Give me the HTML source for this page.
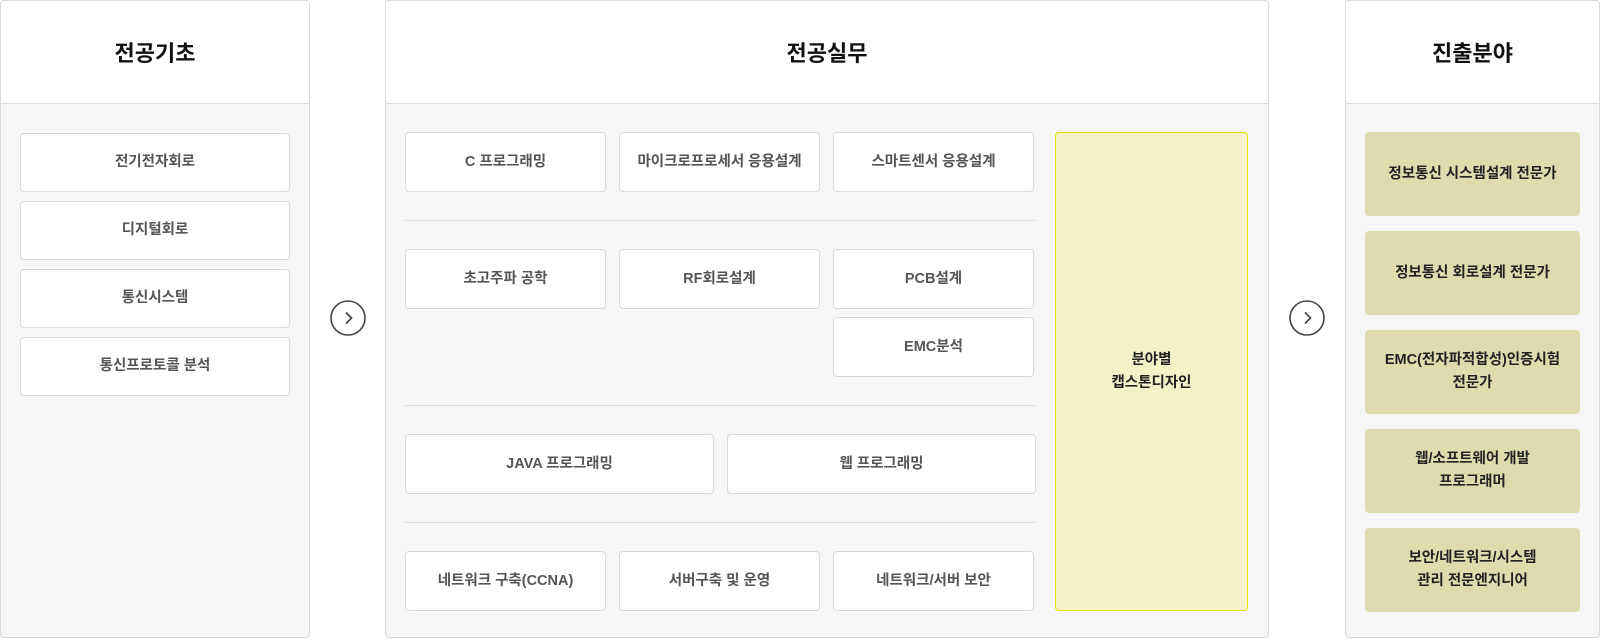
<!DOCTYPE html>
<html><head><meta charset="utf-8"><style>
*{box-sizing:border-box;margin:0;padding:0}
body{width:1600px;height:639px;background:#fff;position:relative;overflow:hidden;font-family:"Liberation Sans","Noto Sans CJK KR",sans-serif}
.p{position:absolute;top:0;height:638px;background:#f6f6f6;border:1px solid #d9d9d9;border-radius:4px;overflow:hidden}
.h{position:absolute;left:0;right:0;top:0;height:103px;background:#fff;border-bottom:1px solid #d9d9d9;display:flex;align-items:center;justify-content:center;font-size:22px;font-weight:bold;color:#111}
.b{position:absolute;background:#fff;border:1px solid #d9d9d9;border-radius:4px;display:flex;align-items:center;justify-content:center;text-align:center;font-size:14.5px;font-weight:bold;color:#555;line-height:23px}
.g{background:#dedcae;border:none;color:#222}
.d{position:absolute;height:1px;background:#dcdcdc}
.arr{position:absolute;width:36px;height:36px}
</style></head><body>
<div class="p" style="left:0;width:310px">
<div class="h">전공기초</div>
</div>
<div class="b" style="left:20px;top:133px;width:270px;height:59px">전기전자회로</div>
<div class="b" style="left:20px;top:201px;width:270px;height:59px">디지털회로</div>
<div class="b" style="left:20px;top:269px;width:270px;height:59px">통신시스템</div>
<div class="b" style="left:20px;top:337px;width:270px;height:59px">통신프로토콜 분석</div>

<svg class="arr" style="left:330px;top:300px" viewBox="0 0 36 36"><circle cx="18" cy="18" r="17" fill="#fff" stroke="#444" stroke-width="1.6"/><path d="M16 12.5l5.5 5.5-5.5 5.5" fill="none" stroke="#444" stroke-width="1.7"/></svg>

<div class="p" style="left:385px;width:884px">
<div class="h">전공실무</div>
</div>
<div class="b" style="left:405px;top:132px;width:201px;height:60px">C 프로그래밍</div>
<div class="b" style="left:619px;top:132px;width:201px;height:60px">마이크로프로세서 응용설계</div>
<div class="b" style="left:833px;top:132px;width:201px;height:60px">스마트센서 응용설계</div>
<div class="d" style="left:405px;top:220px;width:630px"></div>
<div class="b" style="left:405px;top:249px;width:201px;height:60px">초고주파 공학</div>
<div class="b" style="left:619px;top:249px;width:201px;height:60px">RF회로설계</div>
<div class="b" style="left:833px;top:249px;width:201px;height:60px">PCB설계</div>
<div class="b" style="left:833px;top:317px;width:201px;height:60px">EMC분석</div>
<div class="d" style="left:405px;top:405px;width:630px"></div>
<div class="b" style="left:405px;top:434px;width:309px;height:60px">JAVA 프로그래밍</div>
<div class="b" style="left:727px;top:434px;width:309px;height:60px">웹 프로그래밍</div>
<div class="d" style="left:405px;top:522px;width:630px"></div>
<div class="b" style="left:405px;top:551px;width:201px;height:60px">네트워크 구축(CCNA)</div>
<div class="b" style="left:619px;top:551px;width:201px;height:60px">서버구축 및 운영</div>
<div class="b" style="left:833px;top:551px;width:201px;height:60px">네트워크/서버 보안</div>
<div class="b" style="left:1055px;top:132px;width:193px;height:479px;background:#f3f2c8;border-color:#e5e000;color:#222">분야별<br>캡스톤디자인</div>

<svg class="arr" style="left:1289px;top:300px" viewBox="0 0 36 36"><circle cx="18" cy="18" r="17" fill="#fff" stroke="#444" stroke-width="1.6"/><path d="M16 12.5l5.5 5.5-5.5 5.5" fill="none" stroke="#444" stroke-width="1.7"/></svg>

<div class="p" style="left:1345px;width:255px">
<div class="h">진출분야</div>
</div>
<div class="b g" style="left:1365px;top:132px;width:215px;height:84px">정보통신 시스템설계 전문가</div>
<div class="b g" style="left:1365px;top:231px;width:215px;height:84px">정보통신 회로설계 전문가</div>
<div class="b g" style="left:1365px;top:330px;width:215px;height:84px">EMC(전자파적합성)인증시험<br>전문가</div>
<div class="b g" style="left:1365px;top:429px;width:215px;height:84px">웹/소프트웨어 개발<br>프로그래머</div>
<div class="b g" style="left:1365px;top:528px;width:215px;height:84px">보안/네트워크/시스템<br>관리 전문엔지니어</div>
</body></html>
